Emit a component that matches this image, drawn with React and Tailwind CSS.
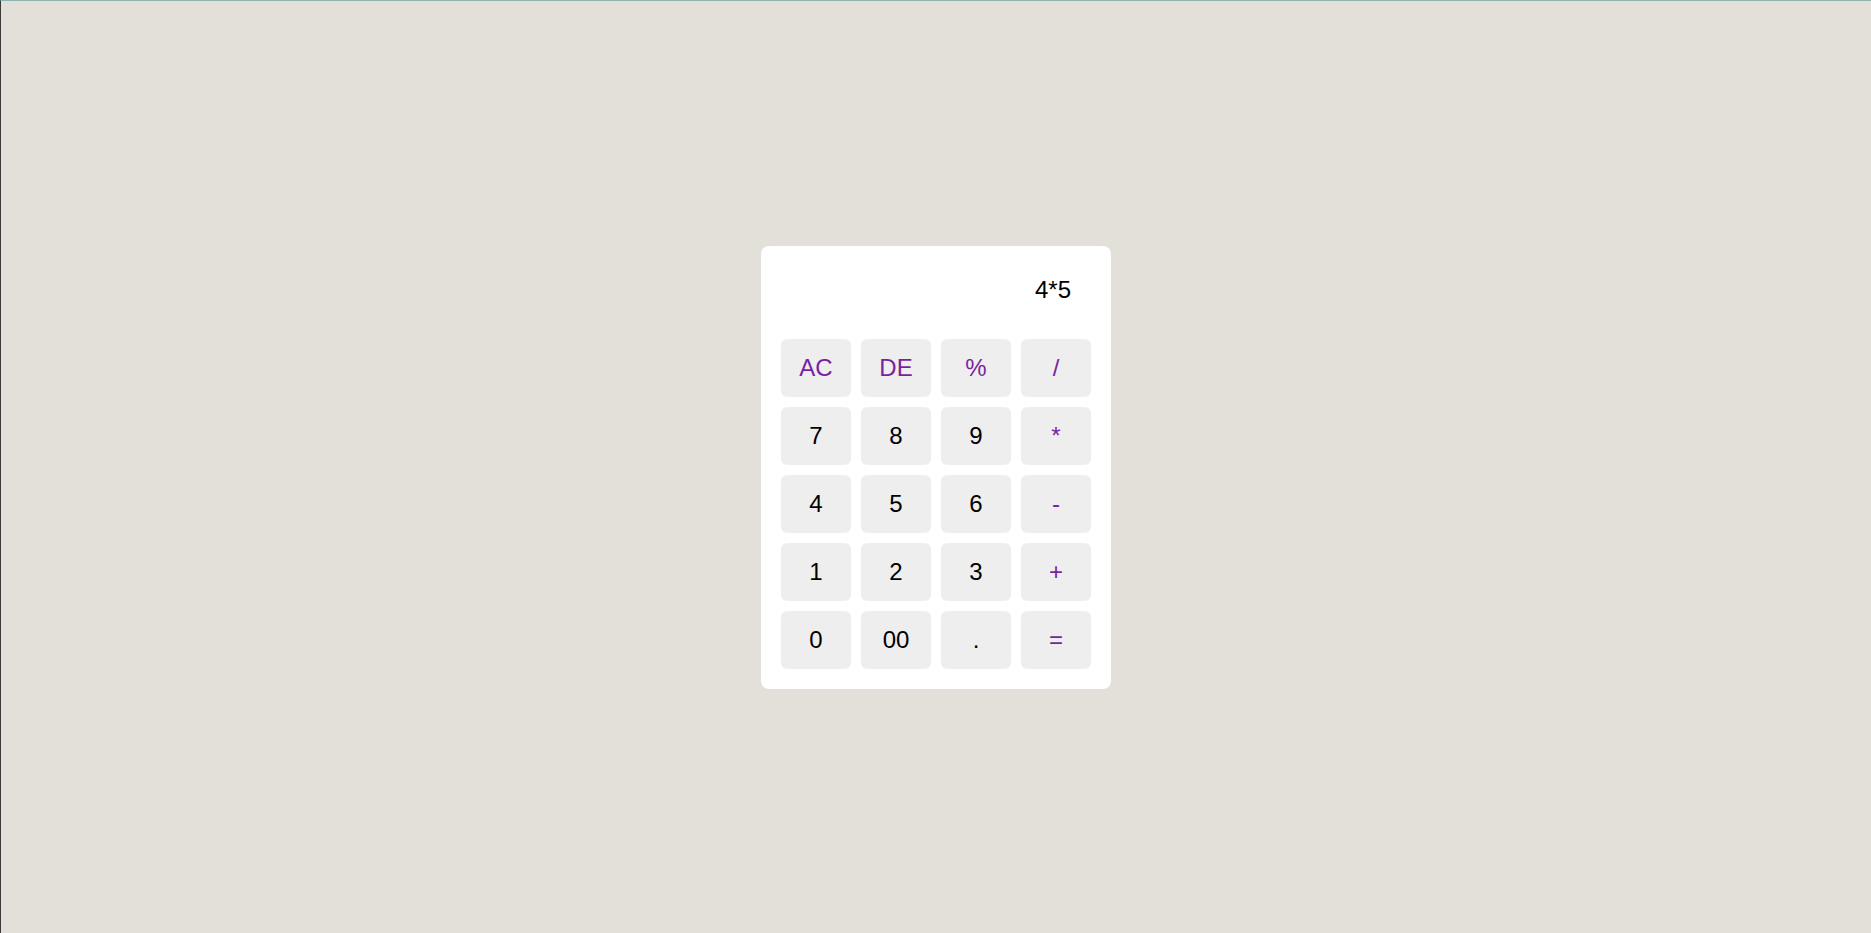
import React, { useState } from 'react';

const keys = [
  { label: 'AC', op: true },
  { label: 'DE', op: true },
  { label: '%', op: true },
  { label: '/', op: true },
  { label: '7' },
  { label: '8' },
  { label: '9' },
  { label: '*', op: true },
  { label: '4' },
  { label: '5' },
  { label: '6' },
  { label: '-', op: true },
  { label: '1' },
  { label: '2' },
  { label: '3' },
  { label: '+', op: true },
  { label: '0' },
  { label: '00' },
  { label: '.' },
  { label: '=', op: true },
];

export default function App() {
  const [input, setInput] = useState('4*5');

  const press = (k) => {
    if (k === 'AC') return setInput('');
    if (k === 'DE') return setInput((v) => v.slice(0, -1));
    if (k === '=') {
      try {
        // eslint-disable-next-line no-new-func
        setInput(String(Function(`return (${input})`)()));
      } catch {
        setInput('Error');
      }
      return;
    }
    setInput((v) => v + k);
  };

  return (
    <div className="min-h-screen w-full bg-[#e3e0da] border-t border-t-[#8fb4b0] border-l border-l-[#3b3b3b] flex items-start justify-center pt-[245px] font-['Liberation_Sans',Arial,sans-serif]">
      {/* Calculator */}
      <div className="w-[350px] bg-white rounded-[8px] p-5">
        <div className="h-[73px] pt-[10px] pr-5 text-right text-[24px] text-black leading-[1.15]">
          {input}
        </div>
        <div className="grid grid-cols-4 gap-[10px]">
          {keys.map((k) => (
            <button
              key={k.label}
              onClick={() => press(k.label)}
              className={`h-[58px] rounded-[6px] bg-[#eeeeee] text-[24px] cursor-pointer ${k.op ? 'text-[#7b1fa2]' : 'text-black'}`}
            >
              {k.label}
            </button>
          ))}
        </div>
      </div>
    </div>
  );
}
